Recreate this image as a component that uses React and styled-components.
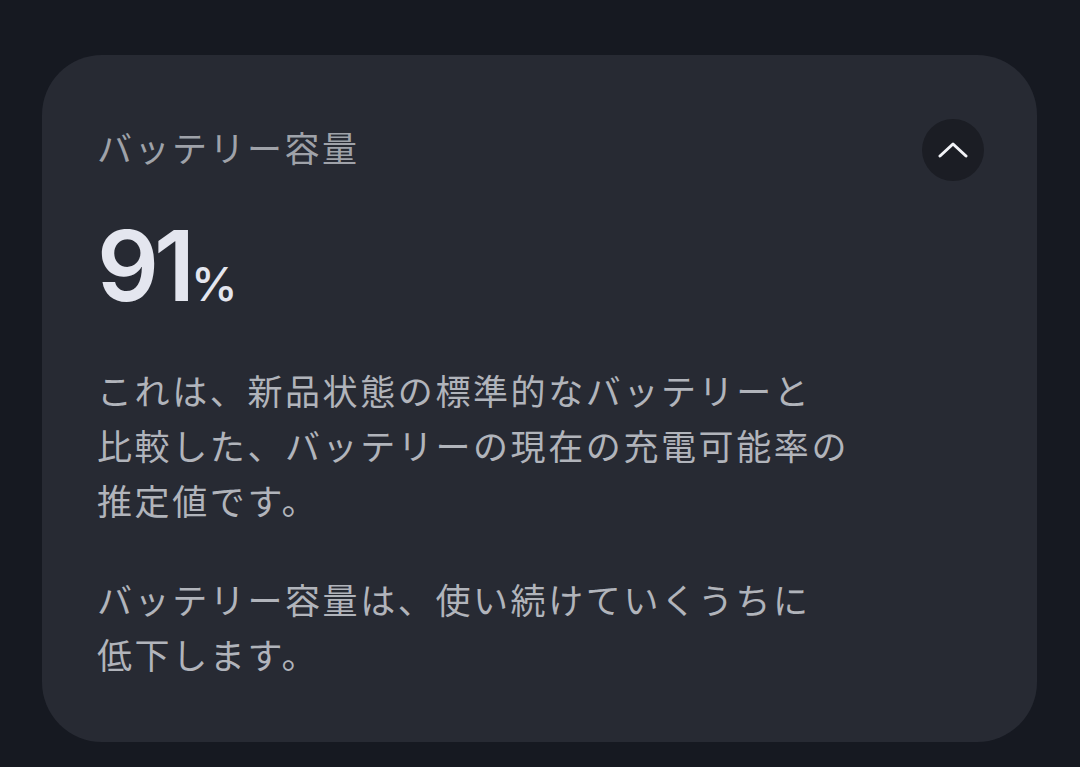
import React from "react";
import styled, { createGlobalStyle } from "styled-components";

const Global = createGlobalStyle`
  html, body { margin: 0; padding: 0; background: #161921; }
  body { font-family: "Noto Sans CJK JP", "Noto Sans", sans-serif; }
`;

const Page = styled.div`
  width: 1080px;
  height: 767px;
  box-sizing: border-box;
  padding: 55px 43px 25px 42px;
  background: #161921;
`;

const Card = styled.section`
  background: #272a33;
  border-radius: 60px;
  padding: 64px 53px 60px 55px;
  box-sizing: border-box;
  height: 687px;
`;

const Header = styled.div`
  display: flex;
  align-items: center;
  justify-content: space-between;
  height: 62px;
`;

const Title = styled.h2`
  margin: 0 0 6px;
  font-family: "Noto Sans CJK JP", sans-serif;
  font-weight: 400;
  font-size: 35px;
  letter-spacing: 2.5px;
  line-height: 44px;
  color: #9fa2a9;
`;

const ToggleButton = styled.button`
  width: 62px;
  height: 62px;
  border-radius: 50%;
  border: none;
  background: #1b1d24;
  display: flex;
  align-items: center;
  justify-content: center;
  padding: 0;
  cursor: pointer;
`;

const Value = styled.div`
  margin-top: 35px;
  display: flex;
  align-items: baseline;
  color: #e4e6ef;
  font-family: "Inter", sans-serif;
  line-height: 100px;
  height: 100px;
`;

const Number = styled.span`
  font-size: 97px;
  font-weight: 600;
  letter-spacing: -5px;
`;

const Unit = styled.span`
  font-size: 47px;
  font-weight: 500;
  margin-left: 1px;
`;

const Paragraph = styled.p`
  margin: ${(p) => (p.$first ? "46px" : "44px")} 0 0;
  font-family: "Noto Sans CJK JP", sans-serif;
  font-size: 35px;
  letter-spacing: 2.6px;
  line-height: 55px;
  color: #b1b4bb;
  white-space: nowrap;
`;

export default function App() {
  return (
    <>
      <Global />
      <Page>
        <Card>
          <Header>
            <Title>バッテリー容量</Title>
            <ToggleButton aria-label="折りたたむ">
              <svg width="30" height="16" viewBox="0 0 30 16" fill="none">
                <path
                  d="M2 14 L15 2 L28 14"
                  stroke="#f2f3f7"
                  strokeWidth="3"
                  strokeLinecap="round"
                  strokeLinejoin="round"
                />
              </svg>
            </ToggleButton>
          </Header>
          <Value>
            <Number>91</Number>
            <Unit>%</Unit>
          </Value>
          <Paragraph $first>
            これは、新品状態の標準的なバッテリーと
            <br />
            比較した、バッテリーの現在の充電可能率の
            <br />
            推定値です。
          </Paragraph>
          <Paragraph>
            バッテリー容量は、使い続けていくうちに
            <br />
            低下します。
          </Paragraph>
        </Card>
      </Page>
    </>
  );
}
